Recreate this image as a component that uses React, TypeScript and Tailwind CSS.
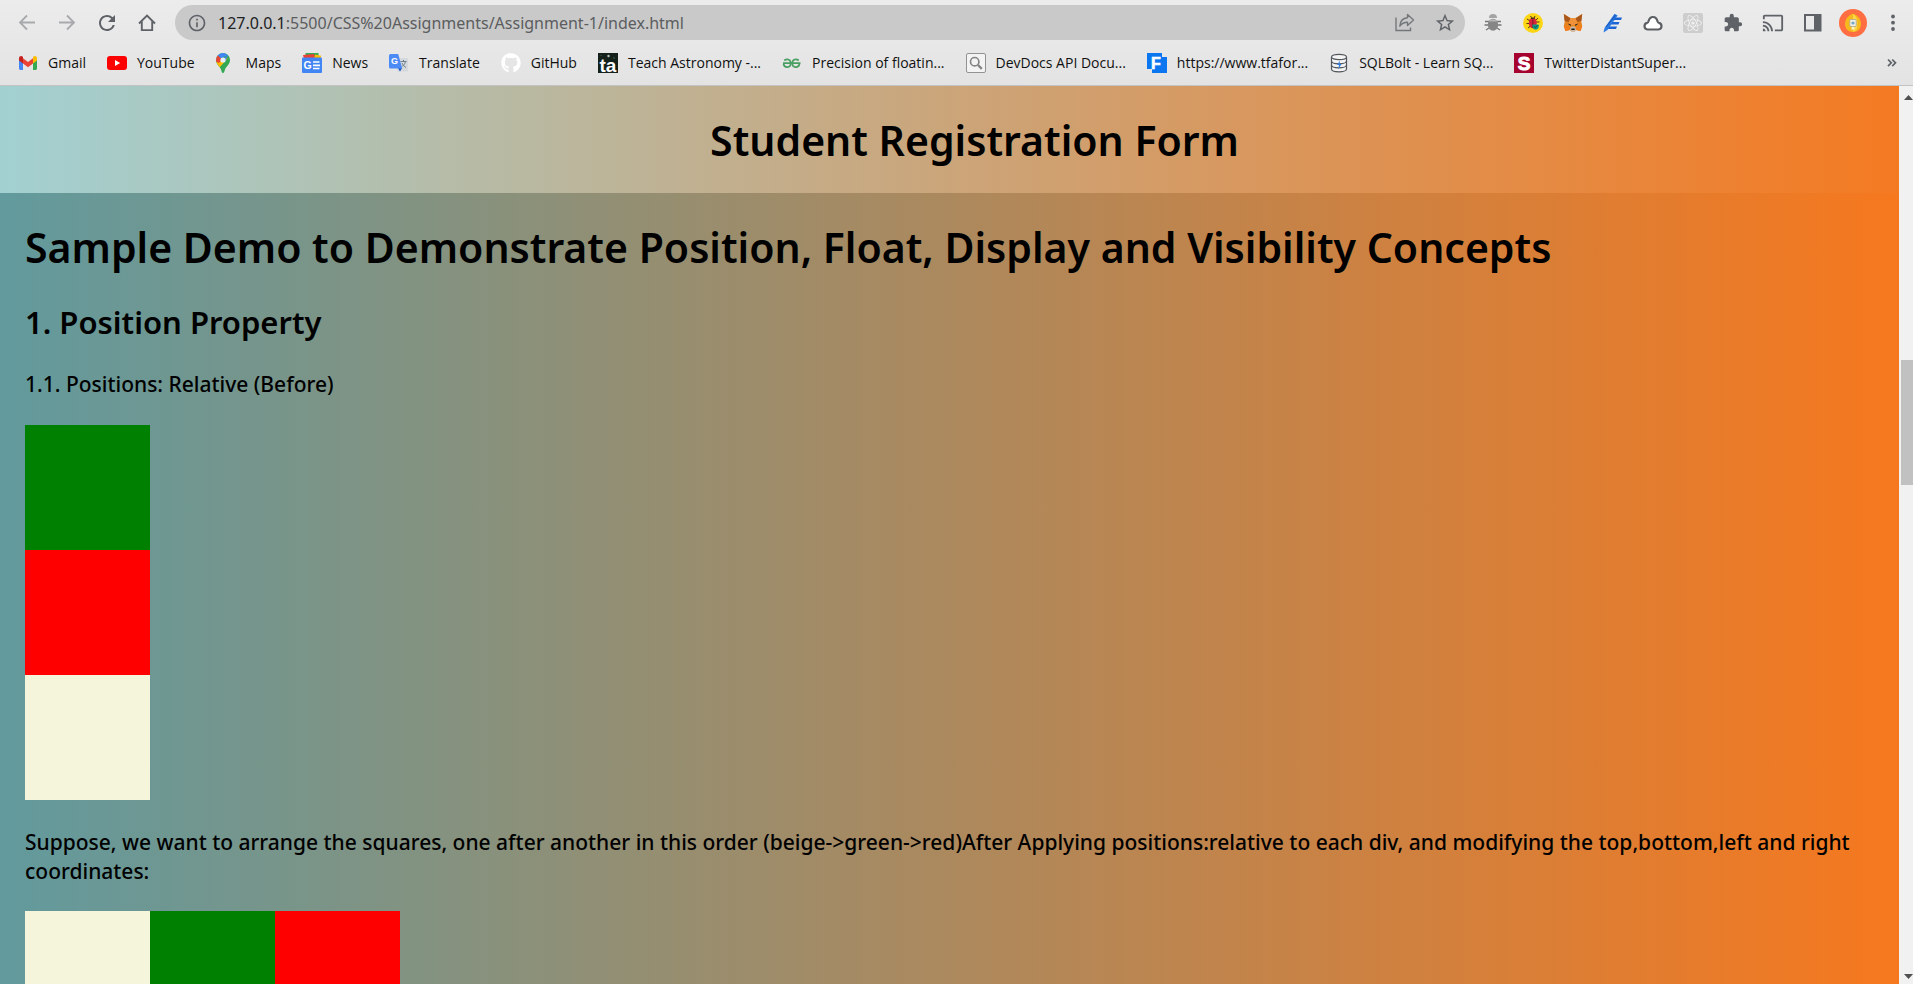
import type { ReactNode } from 'react';
import { FaGithub, FaReact } from 'react-icons/fa';
import { MdCast, MdExtension, MdInfoOutline, MdRefresh, MdStarBorder } from 'react-icons/md';

const label = 'Liberation Sans, sans-serif';

function GmailIcon() {
  return (
    <svg viewBox="0 0 20 20" className="size-5" aria-hidden="true">
      <path d="M1 6v9.5c0 .8.6 1.4 1.4 1.4H5V9z" fill="#4285f4" />
      <path d="M19 6v9.5c0 .8-.6 1.4-1.4 1.4H15V9z" fill="#34a853" />
      <path d="M5 5.2 10 9l5-3.8v5.3l-5 3.8-5-3.8z" fill="#ea4335" />
      <path d="M1 5.4C1 3.3 3.3 2.4 4.7 3.7L5 4v6.5L1 7.5z" fill="#c5221f" />
      <path d="M19 5.4c0-2.1-2.3-3-3.7-1.7L15 4v6.5l4-3z" fill="#fbbc04" />
    </svg>
  );
}

function YouTubeIcon() {
  return (
    <svg viewBox="0 0 20 20" className="size-5" aria-hidden="true">
      <rect y="3" width="20" height="14" rx="3" fill="#f00" />
      <path d="M8 7v6l5.2-3z" fill="#fff" />
    </svg>
  );
}

function MapsIcon() {
  return (
    <svg viewBox="0 0 20 20" className="size-5" aria-hidden="true">
      <defs>
        <clipPath id="pin">
          <path d="M7 0a7 7 0 0 1 7 7c0 4.5-3.8 6-5 9.500-.6 1.700-.8 3.500-2 3.500s-1.400-1.800-2-3.500C3.800 13 0 11.500 0 7a7 7 0 0 1 7-7z" />
        </clipPath>
      </defs>
      <g clipPath="url(#pin)">
        <rect width="14" height="20" fill="#34a853" />
        <path d="M7 7 0 9.500 3.500 14.500 12 5z" fill="#fbbc04" />
        <path d="M1.300 1.800 6 6 3 10-1 8z" fill="#ea4335" />
        <path d="M1.300 2 5 5.200 12.300 2 7-1z" fill="#4285f4" />
        <path d="M7 6 12.300 1.800 9 9z" fill="#4285f4" />
      </g>
      <circle cx="7" cy="7" r="2.600" fill="#e8f0fe" />
    </svg>
  );
}

function NewsIcon() {
  return (
    <svg viewBox="0 0 20 20" className="size-5" aria-hidden="true">
      <path d="M3.500 0h13v6h-13z" fill="#34a853" />
      <path d="m1 2 11-1 1.500 5H2z" fill="#ea4335" />
      <path d="m13 1.500 6.200 1.300L18 7h-6z" fill="#fbbc04" />
      <rect y="4.500" width="20" height="15.500" rx="1" fill="#4285f4" />
      <text x="1.500" y="16.200" fontSize="10.500" fontWeight="700" fontFamily={label} fill="#fff">G</text>
      <path d="M11 9h6.500M11 12.300h7M11 15.500h6.500" stroke="#fff" strokeWidth="1.700" />
    </svg>
  );
}

function TranslateIcon() {
  return (
    <svg viewBox="0 0 20 20" className="size-5" aria-hidden="true">
      <rect x="8" y="5" width="11" height="13.500" rx="1" fill="#d5d8dc" />
      <path d="M11.500 8.500h6M14.500 7v1.500M16.500 8.500c-.5 2.500-2.500 4.500-4 5.500M13 10c.8 2 2.500 3.500 4 4.500" stroke="#6b7f8c" fill="none" />
      <path d="M9 15h4l-2 3.500z" fill="#1a56c4" />
      <path d="M1.500 1h7.700l4 14.500H1.500A1.500 1.500 0 0 1 0 14V2.500A1.500 1.500 0 0 1 1.500 1z" fill="#4c8bf5" />
      <text x="2" y="11" fontSize="9" fontWeight="700" fontFamily={label} fill="#fff">G</text>
    </svg>
  );
}

function AstronomyIcon() {
  return (
    <svg viewBox="0 0 20 20" className="size-5" aria-hidden="true">
      <rect width="20" height="20" fill="#14211a" />
      <circle cx="10.500" cy="3" r="1.200" fill="#b8c4bd" />
      <circle cx="16" cy="5" r=".7" fill="#5f7468" />
      <circle cx="3" cy="2.500" r=".7" fill="#405247" />
      <text x="10" y="18.500" textAnchor="middle" fontSize="19" fontWeight="700" fontFamily={label} fill="#fff">ta</text>
    </svg>
  );
}

function GeeksIcon() {
  return (
    <svg viewBox="0 0 20 20" className="size-5" fill="none" stroke="#4a9f62" strokeWidth="1.700" aria-hidden="true">
      <path d="M1 10.200h17.500M2.300 7.500C4.500 5.500 8.500 6 8.800 10c0 5-6.300 5.500-7.300 1" />
      <path d="M16.700 7.500C14.500 5.500 10.500 6 10.200 10c0 5 6.300 5.500 7.300 1" />
    </svg>
  );
}

function DevDocsIcon() {
  return (
    <svg viewBox="0 0 20 20" className="size-5" fill="none" aria-hidden="true">
      <rect x=".5" y=".5" width="19" height="19" rx="1.500" fill="#f3f3f3" stroke="#929292" />
      <circle cx="8.700" cy="8.700" r="4.200" stroke="#858585" strokeWidth="1.700" />
      <path d="m12 12 3.800 3.800" stroke="#858585" strokeWidth="2.400" />
    </svg>
  );
}

function FormIcon() {
  return (
    <svg viewBox="0 0 20 20" className="size-5" aria-hidden="true">
      <path d="M0 0h15v4h5v16H5v-4H0z" fill="#0b76f0" />
      <path d="M15.500 1v2.500H19" stroke="#e8e8e8" fill="none" />
      <text x="4" y="16" fontSize="16" fontWeight="700" fontFamily={label} fill="#fff" stroke="#fff" strokeWidth=".6">F</text>
    </svg>
  );
}

function DatabaseIcon() {
  return (
    <svg viewBox="0 0 20 20" className="size-5" fill="none" stroke="#50555c" strokeWidth="1.200" aria-hidden="true">
      <path d="M2.500 4v12c0 1.600 3.400 2.800 7.500 2.800s7.500-1.200 7.500-2.800V4" fill="#f4f4f4" />
      <ellipse cx="10" cy="4" rx="7.500" ry="2.600" fill="#f4f4f4" />
      <path d="M2.500 8c0 1.600 3.400 2.800 7.500 2.800s7.500-1.200 7.500-2.800M2.500 12c0 1.600 3.400 2.800 7.500 2.800s7.500-1.200 7.500-2.800" />
      <path d="M11 7.500 8 12h2l-.7 4.500L12.500 11h-2z" fill="#2f7de1" stroke="none" />
    </svg>
  );
}

function SuperIcon() {
  return (
    <svg viewBox="0 0 20 20" className="size-5" aria-hidden="true">
      <rect width="20" height="20" fill="#a6032f" />
      <text x="10" y="17" textAnchor="middle" fontSize="19" fontWeight="700" fontFamily={label} fill="#fff" stroke="#fff">S</text>
    </svg>
  );
}

function ArrowIcon({ forward = false }: { forward?: boolean }) {
  return (
    <svg viewBox="0 0 20 20" className="size-5" fill="none" stroke="#a7a9ac" strokeWidth="1.800" aria-hidden="true">
      {forward ? <path d="M2 9.500h15M10 2.500l7 7-7 7" /> : <path d="M18 9.500H3M10 2.500l-7 7 7 7" />}
    </svg>
  );
}

function HomeIcon() {
  return (
    <svg viewBox="0 0 20 20" className="size-5" fill="none" stroke="#5f6368" strokeWidth="1.900" aria-hidden="true">
      <path d="M2 10.500 10 2.500l8 8M4.800 8.500v8.600h10.400V8.500" />
    </svg>
  );
}

function ShareIcon() {
  return (
    <svg viewBox="0 0 20 20" className="size-5" fill="none" stroke="#74777a" strokeWidth="1.400" aria-hidden="true">
      <path d="M1 4.500v13h14.500v-3" />
      <path d="M12.500 1.500 18.500 7l-6 5.500V9.300C9 9.300 7 10 4.800 13.200c.3-5.200 3-8.200 7.700-8.500z" strokeLinejoin="round" />
    </svg>
  );
}

function BeetleIcon() {
  return (
    <svg viewBox="0 0 20 20" className="size-5" aria-hidden="true">
      <path d="M2 8.500h4M14 8.500h4M1.500 12H18.500M3 17l3-2M17 17l-3-2" stroke="#777" strokeWidth="1.300" />
      <path d="M6 5a4 4 0 0 1 8 0z" fill="#a4a4a4" />
      <ellipse cx="10" cy="11.800" rx="5.200" ry="6" fill="#868686" />
      <path d="M5.500 8.500a5.500 5 0 0 1 9 0z" fill="#b5b5b5" />
    </svg>
  );
}

function LadybugIcon() {
  return (
    <svg viewBox="0 0 20 20" className="size-5" aria-hidden="true">
      <circle cx="10" cy="10" r="10" fill="#fcd616" />
      <path d="M4 6l3 2M3.500 10.500H7M5 15l2.500-2M15 5l-2 2M16.500 9H13M7.500 3 9 5.500M12 3l-1 2.500" stroke="#54341c" />
      <ellipse cx="9.800" cy="10" rx="4" ry="5.300" fill="#d7263d" />
      <path d="M7.500 6a2.600 2.600 0 0 1 4.600 0z" fill="#4b2a20" />
      <path d="M9.800 6.500v8.500" stroke="#6b1a22" strokeWidth=".9" />
      <path d="M9.500 11.500h6.300v2.500a3.200 3.200 0 0 1-6.300 0z" fill="#0f9b84" />
      <path d="m11 13.400 1.300 1.200 2-2.200" stroke="#0a4b50" fill="none" />
    </svg>
  );
}

function FoxIcon() {
  return (
    <svg viewBox="0 0 20 20" className="size-5" aria-hidden="true">
      <path d="M.8 1 7.500 5h5L19.200 1l-1 7 1 5-1.600 5-4.600-1-1.500 1.500h-3L7 17l-4.600 1-1.600-5 1-5z" fill="#e8821e" />
      <path d="M.8 1 8 5.800 5.500 9 1.600 8zM19.200 1 12 5.800 14.500 9l3.900-1z" fill="#a8581c" />
      <path d="m7.500 5-2 5 3 2h3l3-2-2-5z" fill="#f0923a" />
      <path d="m4.500 10.500 3.500 1-.5 1.500zM15.500 10.500l-3.500 1 .5 1.500z" fill="#2b2623" />
      <path d="M.8 13h5l1.200 4-4.600 1zM19.200 13h-5L13 17l4.600 1z" fill="#f27d1d" />
      <path d="m7.500 14.500 1-1h3l1 1 .5 2.500-1.500 1.500h-3L7 17z" fill="#c9b9aa" />
      <path d="M8.200 15.500h3.600L11.500 17h-3z" fill="#1e1c1a" />
    </svg>
  );
}

function PenIcon() {
  return (
    <svg viewBox="0 0 20 20" className="size-5" aria-hidden="true">
      <path d="M.5 19.500 1.500 15 11.500.8l3.200 1.700L4.500 17z" fill="#2d7be5" />
      <path d="m3 14 9.500-12" stroke="#1450ad" fill="none" />
      <path d="M12 4.500h7l-1 2.500h-8zM9.500 9h7l-1 2.500H8zM6.500 13.500h7.500L13 16H4.800z" fill="#1c64d6" />
    </svg>
  );
}

function CloudIcon() {
  return (
    <svg viewBox="0 0 20 20" className="size-5" aria-hidden="true">
      <path d="M4.500 16.500a3.400 3.400 0 0 1-.3-6.700c.6-.2 1-.6 1.200-1.300.7-2.700 2.300-4.500 4.600-4.500s3.900 1.800 4.600 4.500c.2.700.6 1.100 1.200 1.300a3.400 3.400 0 0 1-.3 6.700z" fill="#fff" stroke="#5c5f63" strokeWidth="2.200" />
    </svg>
  );
}

function PanelIcon() {
  return (
    <svg viewBox="0 0 20 20" className="size-5" aria-hidden="true">
      <path d="M1 1h17.500v17.500H1zM3 3v13.500h8V3z" fill="#5f6368" fillRule="evenodd" />
    </svg>
  );
}

function AvatarIcon() {
  return (
    <svg viewBox="0 0 28 28" className="size-7" aria-hidden="true">
      <circle cx="14" cy="14" r="14" fill="#ff6d42" />
      <path d="M14 4.500c2.500 1 8 4 8 10.500 0 5-3.500 8-8 8s-8-3-8-8C6 8.500 11.500 5.500 14 4.500z" fill="#f6b91c" />
      <path d="M14 5c3 1.500 4.500 5 4.500 10S17 22.500 14 22.500z" fill="#fbd64a" />
      <rect x="10.800" y="10.500" width="6.400" height="7" rx="1" fill="#f3efe2" stroke="#a9a58e" strokeWidth=".8" />
      <circle cx="14" cy="14" r="1.600" fill="#6fa8c9" />
      <path d="M12.500 18h3v2.500h-3z" fill="#fdf3c0" />
    </svg>
  );
}

function MenuIcon() {
  return (
    <svg viewBox="0 0 20 20" className="size-5" fill="#5f6368" aria-hidden="true">
      <circle cx="10" cy="3.500" r="1.900" />
      <circle cx="10" cy="9.700" r="1.900" />
      <circle cx="10" cy="16" r="1.900" />
    </svg>
  );
}

function ToolButton({ name, children }: { name: string; children: ReactNode }) {
  return (
    <button type="button" aria-label={name} className="flex h-[35px] w-10 shrink-0 items-center justify-center">
      {children}
    </button>
  );
}

const bookmarks: { name: string; icon: ReactNode }[] = [
  { name: 'Gmail', icon: <GmailIcon /> },
  { name: 'YouTube', icon: <YouTubeIcon /> },
  { name: 'Maps', icon: <MapsIcon /> },
  { name: 'News', icon: <NewsIcon /> },
  { name: 'Translate', icon: <TranslateIcon /> },
  { name: 'GitHub', icon: <FaGithub className="size-5 text-white" /> },
  { name: 'Teach Astronomy -...', icon: <AstronomyIcon /> },
  { name: 'Precision of floatin...', icon: <GeeksIcon /> },
  { name: 'DevDocs API Docu...', icon: <DevDocsIcon /> },
  { name: 'https://www.tfafor...', icon: <FormIcon /> },
  { name: 'SQLBolt - Learn SQ...', icon: <DatabaseIcon /> },
  { name: 'TwitterDistantSuper...', icon: <SuperIcon /> },
];

function BrowserBar() {
  return (
    <div className="shrink-0 border-b border-[#c3c3c3] bg-linear-to-b from-[#ececec] to-[#e3e3e3] font-['Open_Sans',sans-serif]">
      <div className="flex items-center pt-[5px] pl-[7px]">
        <ToolButton name="Back"><ArrowIcon /></ToolButton>
        <ToolButton name="Forward"><ArrowIcon forward /></ToolButton>
        <ToolButton name="Reload"><MdRefresh className="size-6 text-[#5f6368]" /></ToolButton>
        <ToolButton name="Home"><HomeIcon /></ToolButton>
        <div className="mr-2 ml-2 flex h-[35px] flex-1 items-center rounded-full bg-[#c9c9c9] pl-3">
          <MdInfoOutline className="size-5 text-[#5f6368]" />
          <div className="ml-[11px] flex-1 font-['Noto_Sans',sans-serif] text-base text-[#5b5d60]">
            <span className="text-[#202124]">127.0.0.1</span>:5500/CSS%20Assignments/Assignment-1/index.html
          </div>
          <ToolButton name="Share"><ShareIcon /></ToolButton>
          <ToolButton name="Bookmark"><MdStarBorder className="size-[22px] text-[#5f6368]" /></ToolButton>
        </div>
        <ToolButton name="Beetle"><BeetleIcon /></ToolButton>
        <ToolButton name="Ladybug"><LadybugIcon /></ToolButton>
        <ToolButton name="Fox wallet"><FoxIcon /></ToolButton>
        <ToolButton name="Pen"><PenIcon /></ToolButton>
        <ToolButton name="Cloud"><CloudIcon /></ToolButton>
        <ToolButton name="React">
          <span className="flex size-5 items-center justify-center rounded-xs bg-[#cdcdcd]">
            <FaReact className="size-[18px] text-[#f2f2f2]" />
          </span>
        </ToolButton>
        <ToolButton name="Extensions"><MdExtension className="size-5 text-[#5f6368]" /></ToolButton>
        <ToolButton name="Cast"><MdCast className="size-[22px] text-[#5f6368]" /></ToolButton>
        <ToolButton name="Side panel"><PanelIcon /></ToolButton>
        <ToolButton name="Profile"><AvatarIcon /></ToolButton>
        <ToolButton name="Menu"><MenuIcon /></ToolButton>
      </div>
      <nav className="flex h-[45px] items-center gap-[21px] pr-4 pl-[18px] text-sm text-[#111]">
        {bookmarks.map((b) => (
          <a key={b.name} href="#" className="flex shrink-0 items-center gap-2.5 whitespace-nowrap">
            {b.icon}
            {b.name}
          </a>
        ))}
        <button type="button" aria-label="More bookmarks" className="ml-auto">
          <svg viewBox="0 0 10 10" className="size-2.5" fill="none" stroke="#5f6368" strokeWidth="1.700" aria-hidden="true">
            <path d="m1 1.500 3.300 3.300L1 8.200M5.200 1.500l3.300 3.300-3.300 3.400" />
          </svg>
        </button>
      </nav>
    </div>
  );
}

function Scrollbar() {
  return (
    <div className="flex w-[14px] shrink-0 flex-col overflow-hidden bg-[#f1f1f1] pl-0.5" aria-hidden="true">
      <svg viewBox="0 0 12 17" className="h-[17px] w-3 shrink-0"><path d="m3 14 4.500-5 4.500 5z" fill="#505050" /></svg>
      <div className="flex-[257]" />
      <div className="h-[125px] bg-[#c1c1c1]" />
      <div className="flex-[482]" />
      <svg viewBox="0 0 12 17" className="h-[17px] w-3 shrink-0"><path d="m3 7 4.500 5L12 7z" fill="#505050" /></svg>
    </div>
  );
}

export default function App() {
  return (
    <div className="flex h-screen flex-col overflow-hidden">
      <BrowserBar />
      <div className="flex min-h-0 flex-1">
        <main className="min-w-0 flex-1 overflow-hidden bg-[linear-gradient(to_right,#629a9d,#f6781e)] font-['Noto_Sans',sans-serif] font-medium text-black">
          <header className="bg-[linear-gradient(to_right,#a2d0d1,#f47a22)] pt-[29px] pb-7 pl-[50px]">
            <h1 className="text-center text-[41px] leading-[50px] font-semibold">Student Registration Form</h1>
          </header>
          <section className="px-[25px] pt-[29px]">
            <h1 className="text-[41px] leading-[50px] font-semibold">
              Sample Demo to Demonstrate Position, Float, Display and Visibility Concepts
            </h1>
            <h2 className="mt-[30px] text-[31px] leading-10 font-semibold">1. Position Property</h2>
            <h3 className="mt-7 text-[21px] leading-[29px]">1.1. Positions: Relative (Before)</h3>
            <div className="mt-[26px]">
              <div className="size-[125px] bg-[#008000]" />
              <div className="size-[125px] bg-[#ff0000]" />
              <div className="size-[125px] bg-[#f5f5dc]" />
            </div>
            <p className="mt-7 text-[21px] leading-[29px]">
              Suppose, we want to arrange the squares, one after another in this order (beige-&gt;green-&gt;red)After
              Applying positions:relative to each div, and modifying the top,bottom,left and right coordinates:
            </p>
            <div className="mt-[25px] flex">
              <div className="size-[125px] bg-[#f5f5dc]" />
              <div className="size-[125px] bg-[#008000]" />
              <div className="size-[125px] bg-[#ff0000]" />
            </div>
          </section>
        </main>
        <Scrollbar />
      </div>
    </div>
  );
}
